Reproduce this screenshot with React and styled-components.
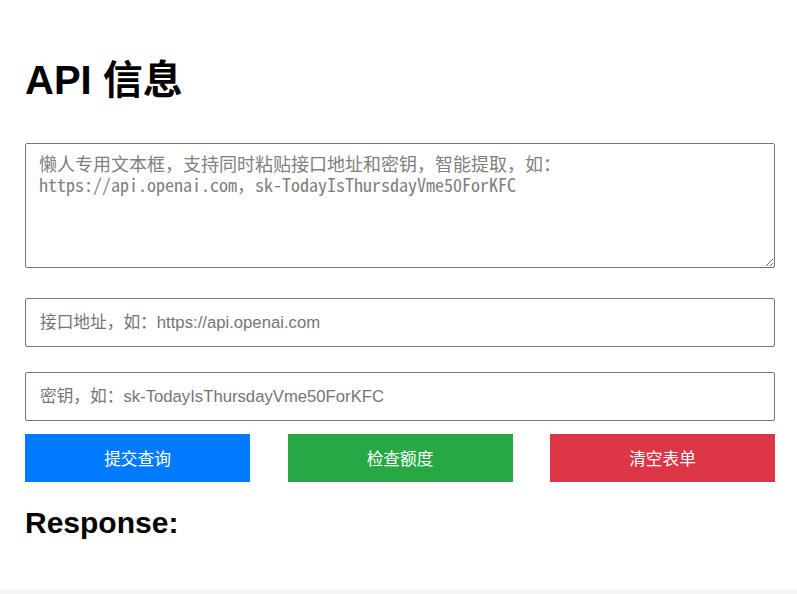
import React from "react";
import styled, { createGlobalStyle } from "styled-components";

const GlobalStyle = createGlobalStyle`
  html, body {
    margin: 0;
    padding: 0;
    background: #f4f4f4;
    font-family: "Liberation Sans", Arial, "Noto Sans CJK SC", sans-serif;
  }
  * {
    box-sizing: border-box;
  }
`;

const Card = styled.div`
  background: #fff;
  padding: 57px 22px 49px 25px;
  box-shadow: 0 0 10px rgba(0, 0, 0, 0.1);
`;

const Title = styled.h1`
  margin: 0 0 40px;
  font-size: 40px;
  line-height: 46px;
  font-weight: bold;
  color: #000;
`;

const Form = styled.div`
  display: flex;
  flex-direction: column;
  width: 750px;
`;

const Lazy = styled.textarea`
  display: block;
  width: 100%;
  height: 125px;
  margin: 0 0 30px;
  padding: 9px 13px;
  border: 1px solid #767676;
  border-radius: 2px;
  font-family: "Noto Sans Mono CJK SC", "Liberation Mono", monospace;
  font-size: 18px;
  line-height: 21px;
  resize: vertical;

  &::placeholder {
    color: #808080;
  }
`;

const Field = styled.input`
  display: block;
  width: 100%;
  height: 49px;
  margin: 0 0 ${(p) => p.$gap}px;
  padding: 0 14px;
  border: 1px solid #767676;
  border-radius: 2px;
  font-family: "Liberation Sans", Arial, "Noto Sans CJK SC", sans-serif;
  font-size: 16.7px;

  &::placeholder {
    color: #757575;
  }
`;

const Buttons = styled.div`
  display: flex;
  justify-content: space-between;
`;

const Button = styled.button`
  width: 225px;
  height: 48px;
  border: none;
  border-radius: 0;
  background: ${(p) => p.$bg};
  color: #fff;
  font-family: "Liberation Sans", Arial, "Noto Sans CJK SC", sans-serif;
  font-size: 16.7px;
  cursor: pointer;
`;

const Response = styled.h2`
  margin: 24px 0 0;
  font-size: 30px;
  line-height: 34px;
  font-weight: bold;
  color: #000;
`;

export default function App() {
  return (
    <>
      <GlobalStyle />
      <Card>
        <Title>API 信息</Title>
        <Form>
          <Lazy
            placeholder={
              "懒人专用文本框，支持同时粘贴接口地址和密钥，智能提取，如：\nhttps://api.openai.com，sk-TodayIsThursdayVme50ForKFC"
            }
          />
          <Field $gap={25} placeholder="接口地址，如：https://api.openai.com" />
          <Field $gap={13} placeholder="密钥，如：sk-TodayIsThursdayVme50ForKFC" />
          <Buttons>
            <Button $bg="#007bff">提交查询</Button>
            <Button $bg="#28a745">检查额度</Button>
            <Button $bg="#dc3545">清空表单</Button>
          </Buttons>
        </Form>
        <Response>Response:</Response>
      </Card>
    </>
  );
}
